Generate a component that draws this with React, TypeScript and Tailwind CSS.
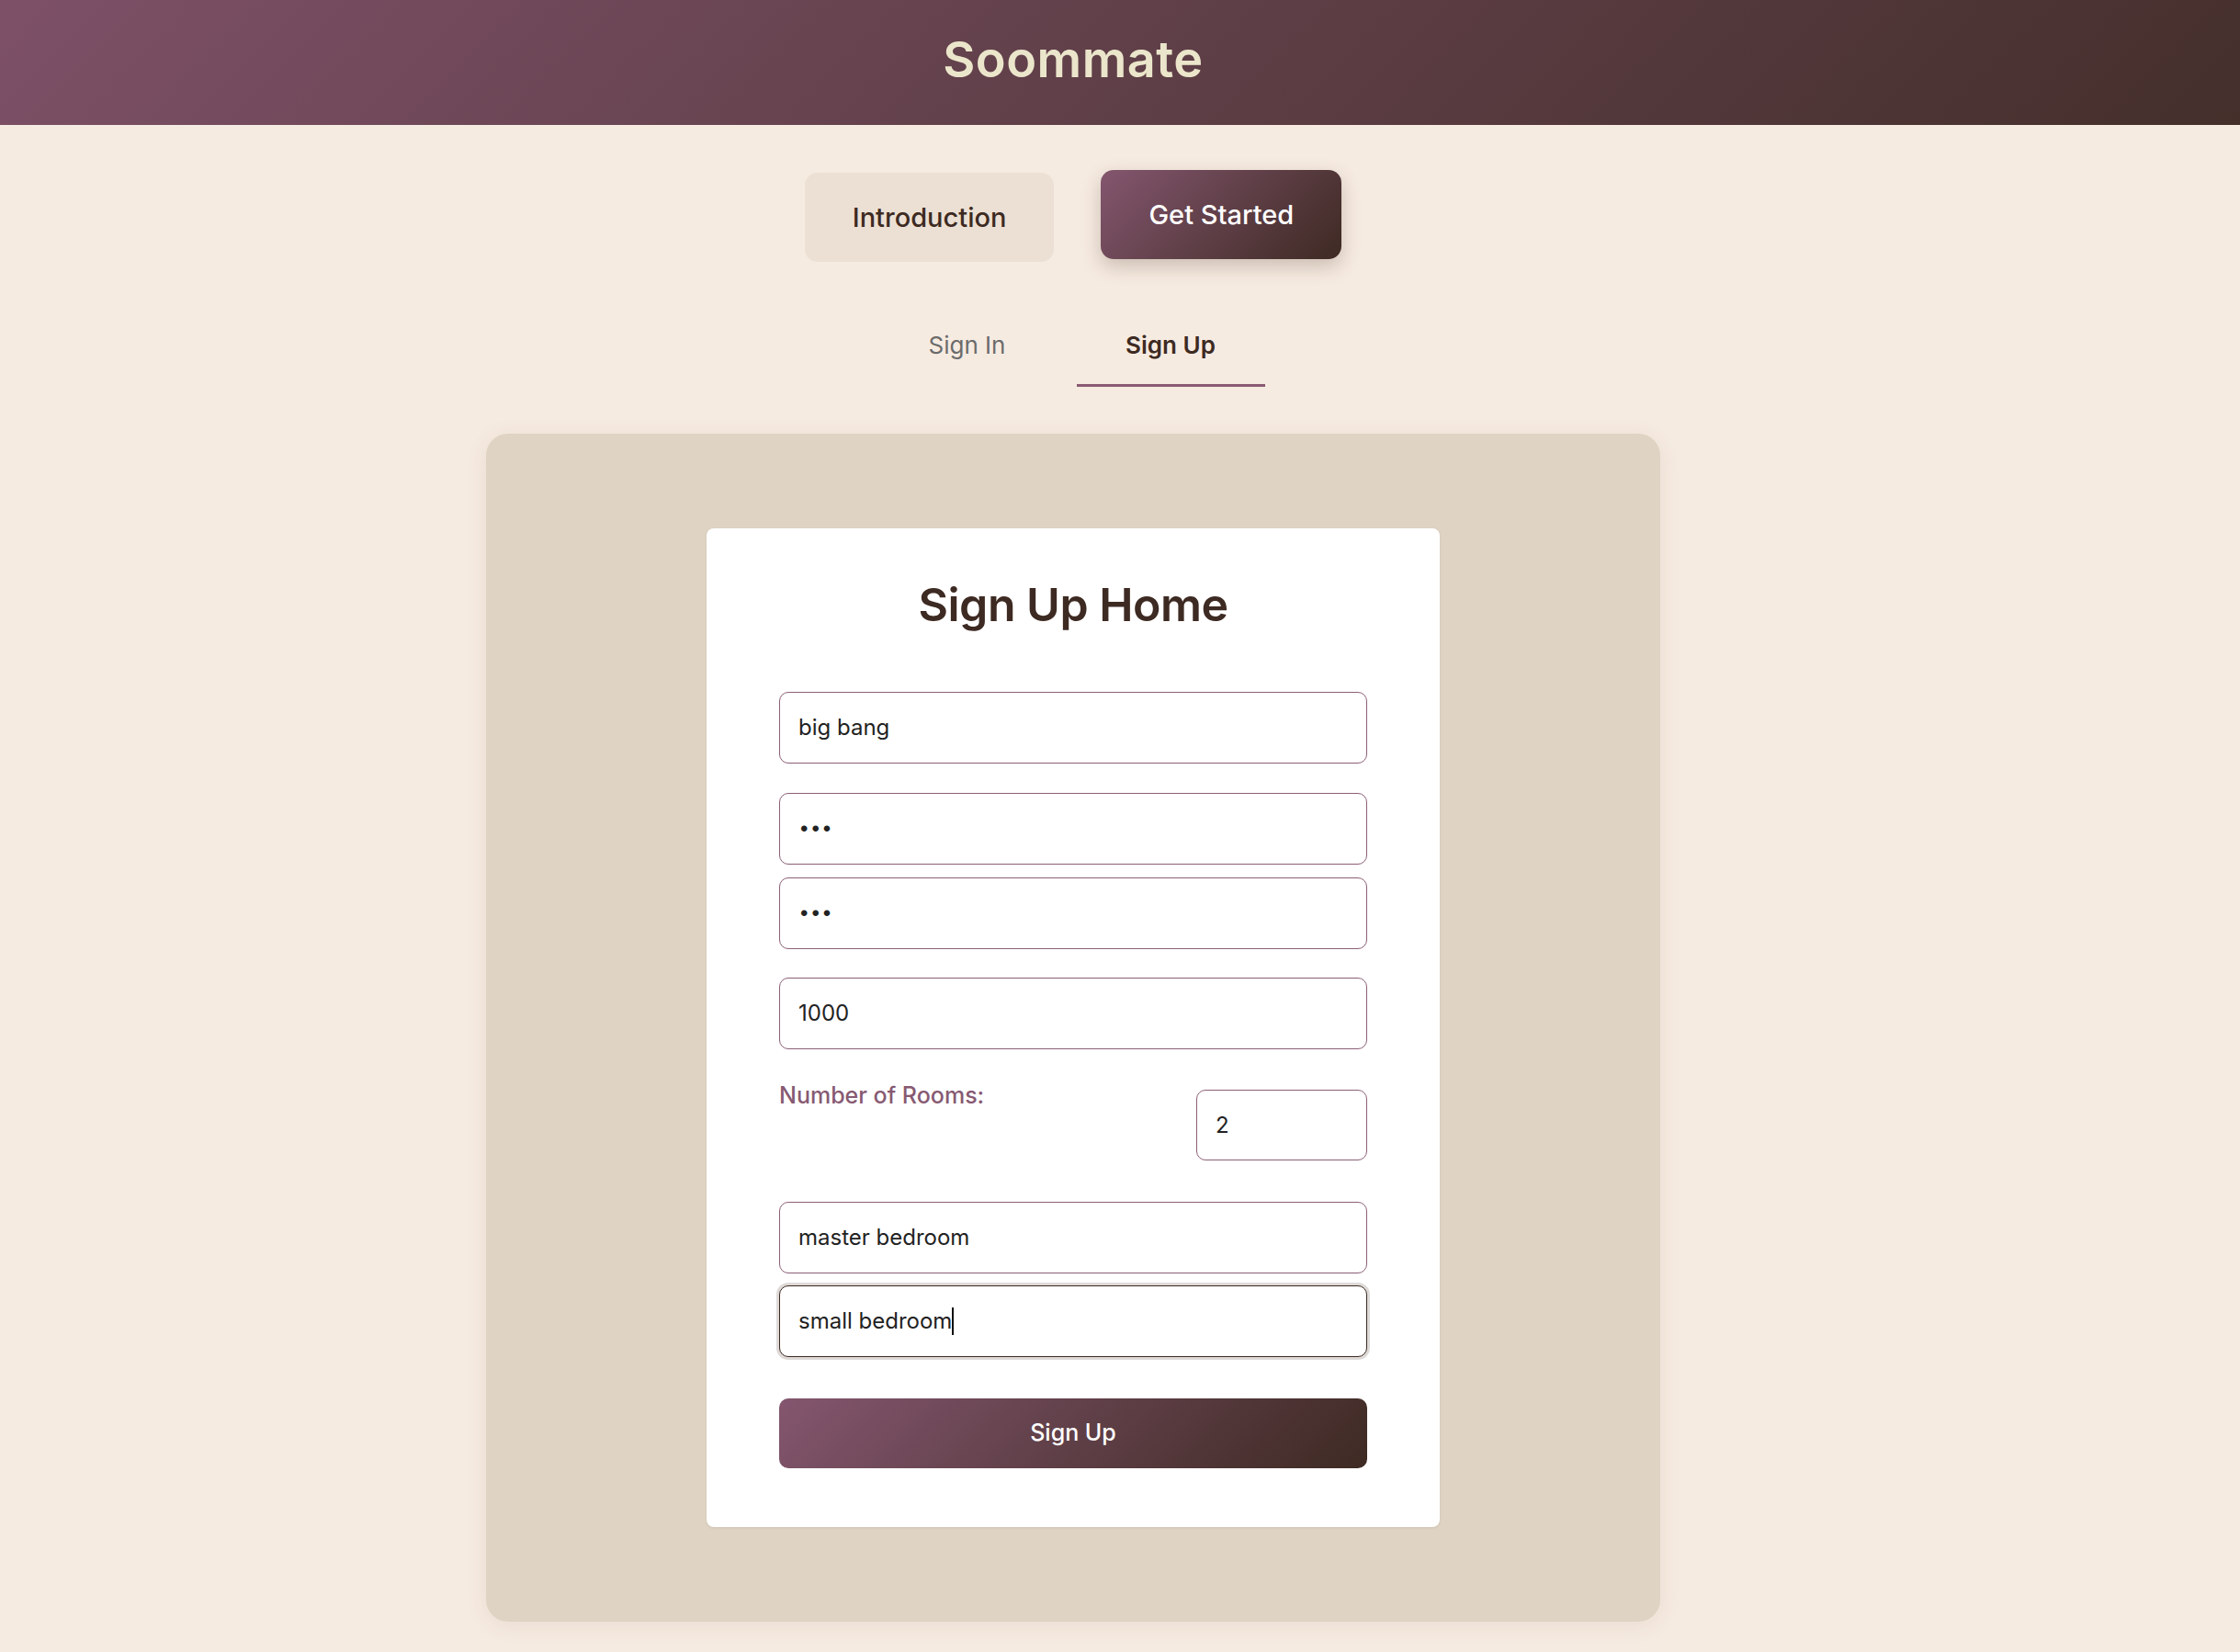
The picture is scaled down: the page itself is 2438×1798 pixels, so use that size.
import { useState } from "react";

export default function App() {
  const [tab, setTab] = useState("signup");
  const [rooms, setRooms] = useState("2");

  return (
    <div className="min-h-screen bg-[#f6ebe1] font-['Inter','Liberation_Sans',sans-serif]">
      <header className="h-[136px] flex items-center justify-center pr-[102px] pb-[7px] bg-linear-135 from-[#7d5067] to-[#442f2b]">
        <h1 className="text-[54px] font-semibold text-[#ebe6cb] tracking-[0.5px]">Soommate</h1>
      </header>

      <main className="pr-[102px] flex flex-col items-center">
        <div className="mt-[52px] flex items-start gap-[51px]">
          <button className="h-[97px] px-[52px] rounded-[14px] bg-[#ece0d4] text-[#3d2a22] text-[29px] font-medium">
            Introduction
          </button>
          <button className="h-[97px] px-[52px] -translate-y-[3px] rounded-[14px] bg-linear-135 from-[#84566f] to-[#3e2a23] text-white text-[29px] font-medium shadow-[0_8px_20px_rgba(80,50,40,0.25)]">
            Get Started
          </button>
        </div>

        <div className="mt-[52px] flex gap-[26px]">
          <button
            onClick={() => setTab("signin")}
            className={
              "w-[186px] pt-[20px] pb-[23px] text-[26px] leading-[1.45] border-b-[3px] " +
              (tab === "signin" ? "border-[#8a5a73] text-[#3d2a22] font-semibold" : "border-transparent text-[#6b6b6b]")
            }
          >
            Sign In
          </button>
          <button
            onClick={() => setTab("signup")}
            className={
              "w-[205px] pt-[20px] pb-[23px] text-[26px] leading-[1.45] border-b-[3px] " +
              (tab === "signup" ? "border-[#8a5a73] text-[#3d2a22] font-semibold" : "border-transparent text-[#6b6b6b]")
            }
          >
            Sign Up
          </button>
        </div>

        <section className="mt-[51px] w-[1278px] py-[103px] flex justify-center rounded-[24px] bg-[#dfd3c3] shadow-[0_4px_24px_rgba(90,60,40,0.08)]">
          <div className="w-[798px] bg-white rounded-[8px] px-[79px] pt-[53px] pb-[64px] shadow-[0_1px_3px_rgba(0,0,0,0.08)]">
            <h2 className="text-center text-[50px] leading-[1.2] font-semibold text-[#3d2a22] tracking-[-0.5px]">
              Sign Up Home
            </h2>

            <form className="mt-[65px] flex flex-col" onSubmit={(e) => e.preventDefault()}>
              <Field defaultValue="big bang" />
              <div className="mt-[32px] flex flex-col gap-[14px]">
                <Field type="password" defaultValue="abc" />
                <Field type="password" defaultValue="abc" />
              </div>
              <div className="mt-[31px]">
                <Field defaultValue="1000" />
              </div>

              <div className="mt-[32px] flex items-start justify-between">
                <label className="text-[25px] leading-[1.5] font-medium text-[#875a72]">Number of Rooms:</label>
                <input
                  value={rooms}
                  onChange={(e) => setRooms(e.target.value)}
                  className="mt-[12px] w-[186px] h-[77px] px-[20px] rounded-[10px] border border-[#8b5f76] bg-white text-[24px] text-[#222] outline-none"
                />
              </div>

              <div className="mt-[45px] flex flex-col gap-[13px]">
                <Field defaultValue="master bedroom" />
                <div className="h-[78px] flex items-center px-[20px] rounded-[10px] border-[1.5px] border-[#3d2a22] bg-white text-[24px] text-[#222] shadow-[0_0_0_3px_#dedad8]">
                  small bedroom
                  <span className="inline-block w-[2px] h-[30px] bg-[#111]" />
                </div>
              </div>

              <button className="mt-[45px] h-[76px] rounded-[10px] bg-linear-135 from-[#84566f] to-[#3e2a23] text-white text-[25px] font-medium">
                Sign Up
              </button>
            </form>
          </div>
        </section>
      </main>
    </div>
  );
}

function Field({ type = "text", defaultValue }: { type?: string; defaultValue: string }) {
  const font = type === "password" ? "font-['Liberation_Sans',sans-serif] tracking-[4px] pl-[22px]" : "";
  return (
    <input
      type={type}
      defaultValue={defaultValue}
      className={"w-full h-[78px] px-[20px] rounded-[10px] border border-[#8b5f76] bg-white text-[24px] text-[#222] outline-none " + font}
    />
  );
}
